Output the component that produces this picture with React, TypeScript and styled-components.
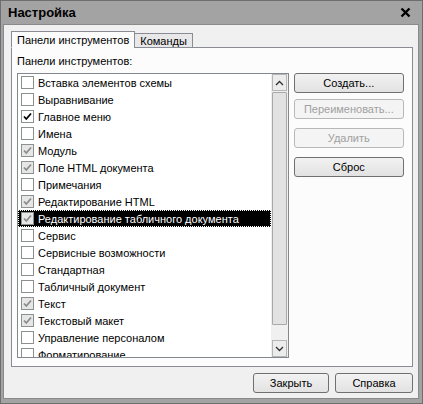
import styled, { createGlobalStyle } from "styled-components"

const GlobalStyle = createGlobalStyle`
    html, body {
        margin: 0;
        padding: 0;
        background: #ffffff;
    }
    body {
        font-family: "Liberation Sans", Arial, sans-serif;
        font-size: 11px;
        color: #000;
    }
`

type Check = "none" | "on" | "gray"

const items: { name: string; check: Check }[] = [
    { name: "Вставка элементов схемы", check: "none" },
    { name: "Выравнивание", check: "none" },
    { name: "Главное меню", check: "on" },
    { name: "Имена", check: "none" },
    { name: "Модуль", check: "gray" },
    { name: "Поле HTML документа", check: "gray" },
    { name: "Примечания", check: "none" },
    { name: "Редактирование HTML", check: "gray" },
    { name: "Редактирование табличного документа", check: "gray" },
    { name: "Сервис", check: "none" },
    { name: "Сервисные возможности", check: "none" },
    { name: "Стандартная", check: "none" },
    { name: "Табличный документ", check: "none" },
    { name: "Текст", check: "gray" },
    { name: "Текстовый макет", check: "gray" },
    { name: "Управление персоналом", check: "none" },
    { name: "Форматирование", check: "none" },
]

const SELECTED = 8

function Tick({ color }: { color: string }) {
    return (
        <svg width="9" height="9" viewBox="0 0 9 9">
            <polyline points="1,4.5 3.3,7 8,1.5" fill="none" stroke={color} strokeWidth="1.8" />
        </svg>
    )
}

function Arrow({ up }: { up?: boolean }) {
    return (
        <svg width="9" height="6" viewBox="0 0 9 6">
            <polyline
                points={up ? "1,5 4.5,1.5 8,5" : "1,1 4.5,4.5 8,1"}
                fill="none"
                stroke="#303030"
                strokeWidth="1.3"
            />
        </svg>
    )
}

function CloseIcon() {
    return (
        <svg width="11" height="11" viewBox="0 0 11 11">
            <path d="M1.5 1.5 L9.5 9.5 M9.5 1.5 L1.5 9.5" stroke="#000" strokeWidth="2.4" />
        </svg>
    )
}

export default function App() {
    return (
        <>
            <GlobalStyle />
            <Window>
                <TitleBar>
                    <Title>Настройка</Title>
                    <Close>
                        <CloseIcon />
                    </Close>
                </TitleBar>
                <Body>
                    <TabStrip>
                        <Tab $active>Панели инструментов</Tab>
                        <Tab>Команды</Tab>
                    </TabStrip>
                    <Panel>
                        <Label>Панели инструментов:</Label>
                        <Content>
                            <ListBox>
                                <Rows>
                                    {items.map((it, i) => (
                                        <Row key={it.name} $selected={i === SELECTED}>
                                            <Box $check={it.check}>
                                                {it.check === "on" && <Tick color="#000" />}
                                                {it.check === "gray" && <Tick color="#8c8c8c" />}
                                            </Box>
                                            <RowText $selected={i === SELECTED}>{it.name}</RowText>
                                        </Row>
                                    ))}
                                </Rows>
                                <ScrollBar>
                                    <ScrollButton>
                                        <Arrow up />
                                    </ScrollButton>
                                    <Track>
                                        <Thumb />
                                    </Track>
                                    <ScrollButton>
                                        <Arrow />
                                    </ScrollButton>
                                </ScrollBar>
                            </ListBox>
                            <SideButtons>
                                <Button>Создать...</Button>
                                <Button disabled>Переименовать...</Button>
                                <Button disabled $gap>Удалить</Button>
                                <Button>Сброс</Button>
                            </SideButtons>
                        </Content>
                    </Panel>
                    <Footer>
                        <Button $w={76}>Закрыть</Button>
                        <Button $w={78}>Справка</Button>
                    </Footer>
                </Body>
            </Window>
        </>
    )
}

const Window = styled.div`
    width: 423px;
    height: 404px;
    box-sizing: border-box;
    background: #a3a3a3;
    border: 1px solid #6e6e6e;
    padding: 0 3px 4px 2px;
    display: flex;
    flex-direction: column;
`

const TitleBar = styled.div`
    height: 23px;
    display: flex;
    align-items: center;
    justify-content: space-between;
    padding: 0 8px 0 5px;
`

const Title = styled.div`
    font-weight: bold;
    font-size: 13px;
    color: #000;
`

const Close = styled.div`
    display: flex;
    align-items: center;
`

const Body = styled.div`
    flex: 1;
    background: #f0f0f0;
    border: 1px solid #8a8a8a;
    display: flex;
    flex-direction: column;
    padding: 5px 5px 4px 7px;
`

const TabStrip = styled.div`
    display: flex;
    align-items: flex-end;
    height: 18px;
    position: relative;
    z-index: 1;
    margin-bottom: -1px;
`

const Tab = styled.div<{ $active?: boolean }>`
    height: ${p => (p.$active ? "17px" : "15px")};
    box-sizing: border-box;
    display: flex;
    align-items: center;
    padding: 0 5px;
    border: 1px solid #898c95;
    border-bottom: ${p => (p.$active ? "1px solid #fcfcfc" : "1px solid #898c95")};
    background: ${p => (p.$active ? "#fcfcfc" : "#e8e8e8")};
    margin-left: ${p => (p.$active ? "0" : "-1px")};
    font-weight: normal;
    white-space: nowrap;
`

const Panel = styled.div`
    height: 320px;
    box-sizing: border-box;
    border: 1px solid #898c95;
    background: #fcfcfc;
    padding: 6px 8px 0 5px;
    display: flex;
    flex-direction: column;
`

const Label = styled.div`
    line-height: 14px;
    margin-bottom: 5px;
`

const Content = styled.div`
    display: flex;
    gap: 5px;
`

const ListBox = styled.div`
    width: 273px;
    height: 285px;
    box-sizing: border-box;
    border: 1px solid #828790;
    background: #fff;
    display: flex;
    overflow: hidden;
`

const Rows = styled.div`
    flex: 1;
    display: flex;
    flex-direction: column;
    overflow: hidden;
`

const Row = styled.div<{ $selected?: boolean }>`
    height: 17px;
    flex: none;
    box-sizing: border-box;
    display: flex;
    align-items: center;
    padding-left: 3px;
    background: ${p => (p.$selected ? "#000" : "transparent")};
    outline: ${p => (p.$selected ? "1px dotted #fff" : "none")};
    outline-offset: -1px;
`

const Box = styled.div<{ $check: Check }>`
    width: 13px;
    height: 13px;
    box-sizing: border-box;
    border: 1px solid #8e8f8f;
    background: ${p => (p.$check === "gray" ? "#e6e6e6" : "#fff")};
    display: flex;
    align-items: center;
    justify-content: center;
    flex: none;
`

const RowText = styled.span<{ $selected?: boolean }>`
    margin-left: 4px;
    font-size: 11px;
    color: ${p => (p.$selected ? "#fff" : "#000")};
    white-space: nowrap;
`

const ScrollBar = styled.div`
    width: 17px;
    flex: none;
    display: flex;
    flex-direction: column;
    background: #f0f0f0;
    padding: 0 1px;
    box-sizing: border-box;
`

const ScrollButton = styled.div`
    height: 17px;
    box-sizing: border-box;
    border: 1px solid #b5b5b5;
    background: #ececec;
    display: flex;
    align-items: center;
    justify-content: center;
`

const Track = styled.div`
    flex: 1;
    padding: 1px 0 15px;
    display: flex;
`

const Thumb = styled.div`
    flex: 1;
    border: 1px solid #a8a8a8;
    background: #e2e2e2;
    border-radius: 1px;
`

const SideButtons = styled.div`
    width: 111px;
    display: flex;
    flex-direction: column;
    gap: 6px;
`

const Button = styled.button<{ $w?: number; $gap?: boolean }>`
    width: ${p => (p.$w ? `${p.$w}px` : "100%")};
    height: 20px;
    margin-top: ${p => (p.$gap ? "3px" : "0")};
    margin-bottom: ${p => (p.$gap ? "3px" : "0")};
    box-sizing: border-box;
    border: 1px solid #707070;
    border-radius: 3px;
    background: linear-gradient(#f2f2f2, #e2e2e2);
    font-family: "Liberation Sans", Arial, sans-serif;
    font-size: 11px;
    color: #000;
    padding: 0;

    &:disabled {
        border-color: #b8b8b8;
        background: #f4f4f4;
        color: #a0a0a0;
    }
`

const Footer = styled.div`
    display: flex;
    justify-content: flex-end;
    gap: 6px;
    margin-top: 6px;
`
